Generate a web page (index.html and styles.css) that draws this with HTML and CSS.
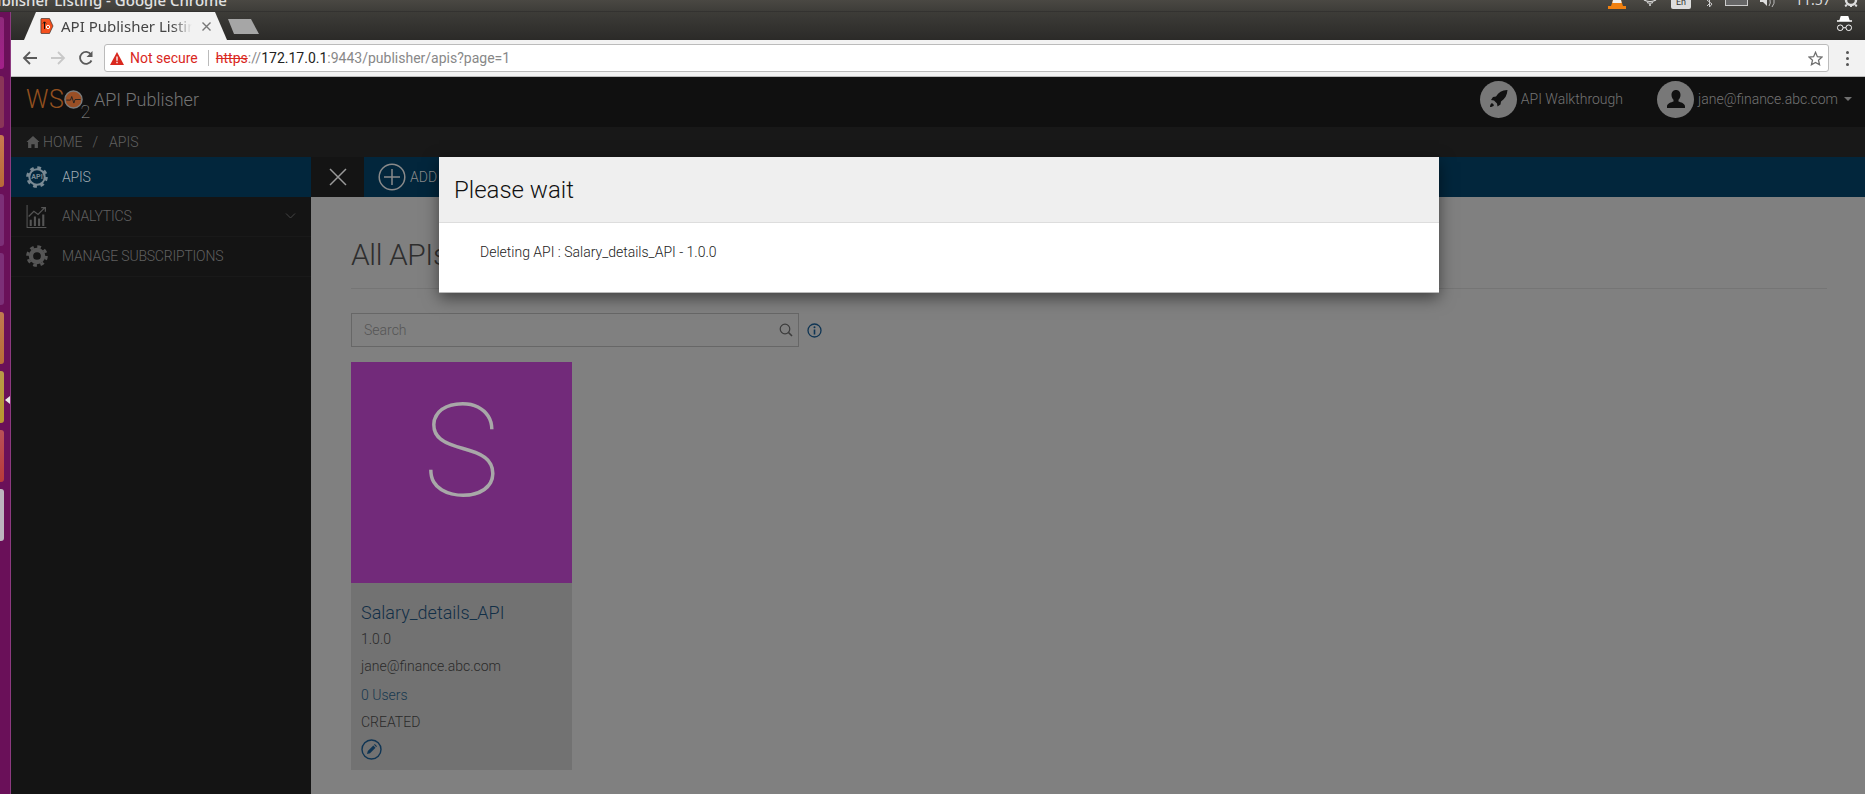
FILE: index.html
```html
<!DOCTYPE html>
<html lang="en">
<head>
    <meta charset="UTF-8">
    <title>API Publisher Listing - Google Chrome</title>
    <link rel="stylesheet" href="styles.css">
</head>
<body>
    <div class="os-bar">
        <div class="os-title">ublisher Listing - Google Chrome</div>
        <div class="tray">
            <svg class="tray-vlc" width="18" height="9" viewBox="0 0 18 9"><path d="M5 0h8l2 6h3v3H0V6h3z" fill="#f08010"/><path d="M5 0h8l.7 3H4.300z" fill="#eee"/></svg>
            <svg class="tray-wifi" width="14" height="6" viewBox="0 0 14 6"><path d="M1 0q6 3 12 0M4 2.500q3 1.500 6 0" stroke="#ddd" stroke-width="1.200" fill="none"/><circle cx="7" cy="5" r="1" fill="#ddd"/></svg>
            <div class="tray-lang">En</div>
            <svg class="tray-bt" width="8" height="8" viewBox="0 0 8 8"><path d="M1 0l5 4-2.500 3V0M1 6l3-3" stroke="#ccc" fill="none"/></svg>
            <div class="tray-battery"></div>
            <svg class="tray-sound" width="18" height="8" viewBox="0 0 18 8"><path d="M0 0h3l4-2v8L3 2H0z" fill="#ddd"/><path d="M10 0q1 3-1 6M14 0q1 3-2 7" stroke="#bbb" fill="none"/></svg>
            <div class="tray-time">11:57</div>
            <svg class="tray-gear" width="16" height="8" viewBox="0 0 16 8"><circle cx="8" cy="0" r="5" fill="none" stroke="#ddd" stroke-width="2.500"/><path d="M2 6l2-1M14 6l-2-1M8 7V5" stroke="#ddd" stroke-width="2"/></svg>
        </div>
    </div>

    <div class="desktop">
        <div class="launcher">
            <div class="launcher-item tile-1"></div>
            <div class="launcher-item tile-2"></div>
            <div class="launcher-item tile-3"></div>
            <div class="launcher-item tile-4"></div>
            <div class="launcher-item tile-4"></div>
            <div class="launcher-item tile-5"></div>
            <div class="launcher-item tile-6"></div>
            <div class="launcher-item tile-7"></div>
            <div class="launcher-item tile-8"></div>
            <div class="launcher-arrow"></div>
        </div>

        <div class="window">
            <div class="tabstrip">
                <div class="tab">
                    <svg class="tab-icon" width="14" height="16" viewBox="0 0 13 16"><path d="M1 .5h8l3.500 7.500L9 15.500H1a.6.6 0 0 1-.6-.6V1A.6.6 0 0 1 1 .5z" fill="#f4501e" stroke="#222" stroke-width=".6"/><path d="M4 11V4M2.500 5.500L4 3.800l1.500 1.700" stroke="#111" fill="none"/><circle cx="7.500" cy="9" r="1.700" fill="none" stroke="#fff"/></svg>
                    <span class="tab-title">API Publisher Listing</span>
                    <svg class="tab-close" width="9" height="9" viewBox="0 0 9 9"><path d="M.5.5l8 8M8.500.5l-8 8" stroke="#777" stroke-width="1.400"/></svg>
                </div>
                <div class="new-tab"></div>
                <svg class="incognito" width="17" height="16" viewBox="0 0 18 17"><path d="M5 0h8l1.500 4.500H17V6H1V4.500h2.500z" fill="#fff"/><circle cx="4.500" cy="12.500" r="3" fill="none" stroke="#fff"/><circle cx="13.500" cy="12.500" r="3" fill="none" stroke="#fff"/><path d="M7.500 12.500h3" stroke="#fff"/></svg>
            </div>

            <div class="toolbar">
                <svg class="nav-btn" width="16" height="16" viewBox="0 0 16 16"><path d="M15 8H2M8 2L2 8l6 6" stroke="#5a5a5a" stroke-width="1.800" fill="none"/></svg>
                <svg class="nav-btn" width="16" height="16" viewBox="0 0 16 16"><path d="M1 8h13M8 2l6 6-6 6" stroke="#c8c8c8" stroke-width="1.800" fill="none"/></svg>
                <svg class="nav-btn" width="16" height="16" viewBox="0 0 16 16"><path d="M13.500 10.500A6 6 0 1 1 13 4.500" stroke="#5a5a5a" stroke-width="1.800" fill="none"/><path d="M14.500 1v6h-6z" fill="#5a5a5a"/></svg>
                <div class="omnibox">
                    <svg class="warn-icon" width="14" height="13" viewBox="0 0 14 13"><path d="M7 0l7 13H0z" fill="#d9281e"/><path d="M7 4.500v4.300M7 9.800v1.500" stroke="#fff" stroke-width="1.300"/></svg>
                    <span class="not-secure">Not secure</span>
                    <span class="omni-sep"></span>
                    <span class="url"><s class="url-scheme">https</s><span class="url-dim">://</span><span class="url-host">172.17.0.1</span><span class="url-dim">:9443/publisher/apis?page=1</span></span>
                    <svg class="star" width="15" height="15" viewBox="0 0 24 24"><path d="M12 2l3 7 7.500.7-5.700 5 1.700 7.300L12 18.200 5.500 22l1.700-7.300-5.700-5L9 9z" fill="none" stroke="#6e6e6e" stroke-width="2"/></svg>
                </div>
                <div class="chrome-menu"><i></i><i></i><i></i></div>
            </div>

            <div class="navbar">
                <div class="logo">
                    <span class="logo-ws">WS</span>
                    <svg class="logo-o" width="19" height="19" viewBox="0 0 16 16"><circle cx="8" cy="8" r="7.200" fill="#9a4f25" stroke="#7b7b7b" stroke-width="1.200"/><path d="M2 8.500h3.500l1-3 1.800 5.500 1-3H14" stroke="#222" stroke-width=".8" fill="none"/></svg>
                    <span class="logo-two">2</span>
                </div>
                <span class="brand">API Publisher</span>
                <div class="nav-right">
                    <div class="nav-link">
                        <span class="nav-circle">
                            <svg width="22" height="22" viewBox="0 0 22 22"><path d="M20 2c-5 .3-8.500 2.500-11 6.500L6 9l-2 3 3 .5 3 3 .5 3 3-2 .5-3c4-2.500 6.200-6.500 6.500-11.500z" fill="#111"/><path d="M5 15c-1.500.5-2 2.500-2 4 1.500 0 3.500-.5 4-2z" fill="#111"/></svg>
                        </span>
                        <span>API Walkthrough</span>
                    </div>
                    <div class="nav-link nav-user">
                        <span class="nav-circle">
                            <svg width="22" height="22" viewBox="0 0 22 22"><path d="M11 2c3 0 4.500 2.300 4.500 5 0 2-1 3.800-2 4.800v1.700c2 .8 6.500 1.700 6.500 5V20H2v-1.500c0-3.300 4.500-4.200 6.500-5v-1.700c-1-1-2-2.800-2-4.800 0-2.700 1.500-5 4.500-5z" fill="#111"/></svg>
                        </span>
                        <span>jane@finance.abc.com</span>
                        <span class="caret"></span>
                    </div>
                </div>
            </div>

            <div class="breadcrumb">
                <svg width="14" height="12" viewBox="0 0 12 11"><path d="M6 0l6 5.500h-1.500V11H7.500V7.500h-3V11H1.500V5.500H0z" fill="#555"/></svg>
                <span class="crumb-home">HOME</span>
                <span class="crumb-sep">/</span>
                <span>APIS</span>
            </div>

            <div class="workspace">
                <nav class="sidebar">
                    <div class="side-item active">
                        <svg class="side-icon" width="22" height="22" viewBox="0 0 20 20"><circle cx="10" cy="10" r="8.500" fill="none" stroke="#7a8a94" stroke-width="2.600" stroke-dasharray="3.400 3.275"/><circle cx="10" cy="10" r="7" fill="none" stroke="#7a8a94" stroke-width="1.800"/><text x="10" y="12" class="gear-text">API</text></svg>
                        <span>APIS</span>
                    </div>
                    <div class="side-item">
                        <svg class="side-icon" width="22" height="23" viewBox="0 0 20 22"><path d="M.5 0v21.500H19" stroke="#555" fill="none"/><path d="M3 20v-6h2v6zM7 20v-9h2v9zM11 20v-7h2v7zM15 20V9h2v11z" fill="#555"/><path d="M2 11l5-5 4 3 6-6M14 2.500h4v4" stroke="#555" stroke-width="1.200" fill="none"/></svg>
                        <span>ANALYTICS</span>
                        <svg class="chevron" width="11" height="6" viewBox="0 0 10 6"><path d="M.5.5L5 5 9.500.5" stroke="#444" fill="none"/></svg>
                    </div>
                    <div class="side-item">
                        <svg class="side-icon" width="22" height="22" viewBox="0 0 20 20"><circle cx="10" cy="10" r="8.500" fill="none" stroke="#555" stroke-width="2.600" stroke-dasharray="3.400 3.275"/><circle cx="10" cy="10" r="5.500" fill="none" stroke="#555" stroke-width="4"/></svg>
                        <span>MANAGE SUBSCRIPTIONS</span>
                    </div>
                </nav>

                <main class="content">
                    <div class="action-bar">
                        <div class="close-block">
                            <svg width="18" height="18" viewBox="0 0 18 18"><path d="M1 1l16 16M17 1L1 17" stroke="#9a9a9a" stroke-width="1.500"/></svg>
                        </div>
                        <div class="actions">
                            <svg width="28" height="28" viewBox="0 0 28 28"><circle cx="14" cy="14" r="12.800" fill="none" stroke="#8a8a8a" stroke-width="1.500"/><path d="M14 6v16M6 14h16" stroke="#8a8a8a" stroke-width="1.500"/></svg>
                            <span>ADD</span>
                        </div>
                    </div>

                    <div class="listing">
                        <h1 class="page-title">All APIs</h1>
                        <div class="search-row">
                            <div class="search-box">
                                <span>Search</span>
                                <svg width="14" height="14" viewBox="0 0 14 14"><circle cx="6" cy="6" r="4.800" fill="none" stroke="#3c3c3c" stroke-width="1.200"/><path d="M9.500 9.500L13 13" stroke="#3c3c3c" stroke-width="1.600"/></svg>
                            </div>
                            <svg width="15" height="15" viewBox="0 0 15 15"><circle cx="7.500" cy="7.500" r="6.500" fill="none" stroke="#0f3554" stroke-width="1.300"/><path d="M7.500 6.500v5" stroke="#0f3554" stroke-width="1.600"/><circle cx="7.500" cy="4.200" r="1" fill="#0f3554"/></svg>
                        </div>

                        <div class="api-card">
                            <div class="api-thumb">S</div>
                            <div class="api-info">
                                <div class="api-name">Salary_details_API</div>
                                <div class="api-version">1.0.0</div>
                                <div class="api-owner">jane@finance.abc.com</div>
                                <div class="api-users">0 Users</div>
                                <div class="api-status">CREATED</div>
                                <svg class="api-edit" width="21" height="21" viewBox="0 0 21 21"><circle cx="10.500" cy="10.500" r="9.500" fill="none" stroke="#0f3554" stroke-width="1.400"/><path d="M6 15l.8-3 5.500-5.500 2.200 2.200L9 14.200z" fill="#0f3554"/><path d="M13 5.800l.8-.8 2.200 2.200-.8.800z" fill="#0f3554"/></svg>
                            </div>
                        </div>
                    </div>
                </main>
            </div>
        </div>
    </div>

    <div class="modal">
        <div class="modal-header">Please wait</div>
        <div class="modal-body">Deleting API : Salary_details_API - 1.0.0</div>
    </div>
</body>
</html>
```

FILE: styles.css
```css
html, body {
    margin: 0;
    height: 100%;
}

body {
    width: 1865px;
    height: 794px;
    overflow: hidden;
    font-family: Roboto, "Liberation Sans", sans-serif;
    background-color: #808080;
}

/* desktop title bar, cut off by the top of the screen */
.os-bar {
    height: 12px;
    box-sizing: border-box;
    display: flex;
    justify-content: space-between;
    overflow: hidden;
    background: linear-gradient(#4a4843, #3e3d39);
    border-bottom: 1px solid #333230;
}

.os-title {
    margin: -9px 0 0 -8px;
    font-family: "Noto Sans", sans-serif;
    font-size: 15px;
    font-weight: 500;
    line-height: 18px;
    white-space: nowrap;
    color: #e2e2e2;
}

.tray {
    display: flex;
    align-items: flex-start;
    height: 12px;
    padding-right: 6px;
}

.tray-vlc { margin-right: 17px; }
.tray-wifi { margin-right: 14px; }

.tray-lang {
    width: 20px;
    height: 9px;
    margin-right: 15px;
    background: #ddd;
    border-radius: 0 0 2px 2px;
    font-size: 9px;
    line-height: 4px;
    text-align: center;
    color: #333;
}

.tray-bt { margin-right: 11px; }

.tray-battery {
    width: 21px;
    height: 5px;
    margin-right: 12px;
    border: 1px solid #ccc;
    border-top: none;
    background: #666;
}

.tray-sound { margin-right: 17px; }

.tray-time {
    width: 34px;
    margin-top: -9px;
    margin-right: 14px;
    font-family: "Noto Sans", sans-serif;
    font-size: 14px;
    line-height: 18px;
    color: #ddd;
}

.desktop {
    display: flex;
    height: 782px;
}

/* launcher strip */
.launcher {
    position: relative;
    width: 11px;
    flex-shrink: 0;
    box-sizing: border-box;
    padding-top: 5px;
    display: flex;
    flex-direction: column;
    gap: 7px;
    background: #6a1059;
    border-right: 1px solid #8c3a80;
}

.launcher-item {
    width: 4px;
    height: 52px;
    flex-shrink: 0;
    border-radius: 0 3px 3px 0;
}

.tile-1 { background: linear-gradient(#8f2a7c, #a3208a); }
.tile-2 { background: #8a3558; }
.tile-3 { background: linear-gradient(#c87a50, #b86a38); }
.tile-4 { background: #7c2f78; }
.tile-5 { background: linear-gradient(#c07a50, #b86c38); }
.tile-6 { background: linear-gradient(#b89a48, #b8982e); }
.tile-7 { background: linear-gradient(#b85058, #b83a3a); }
.tile-8 { background: #bdb5bf; }

.launcher-arrow {
    position: absolute;
    top: 384px;
    left: 5px;
    border-top: 4px solid transparent;
    border-bottom: 4px solid transparent;
    border-right: 5px solid #e8e8e8;
}

.window {
    flex: 1;
    min-width: 0;
    display: flex;
    flex-direction: column;
}

/* browser chrome */
.tabstrip {
    height: 28px;
    flex-shrink: 0;
    display: flex;
    align-items: flex-end;
    background: linear-gradient(#3d3c38, #2b2a28);
}

.tab {
    width: 203px;
    height: 28px;
    margin-left: 13px;
    box-sizing: border-box;
    padding-left: 16px;
    display: flex;
    align-items: center;
    background: #f2f2f2;
    clip-path: polygon(12px 0, 191px 0, 203px 100%, 0 100%);
    font-family: "Noto Sans", sans-serif;
    font-size: 15px;
    color: #444;
}

.tab-icon { margin-right: 7px; flex-shrink: 0; }

.tab-title {
    width: 131px;
    flex-shrink: 0;
    overflow: hidden;
    white-space: nowrap;
    -webkit-mask-image: linear-gradient(to right, #000 85%, transparent);
    mask-image: linear-gradient(to right, #000 85%, transparent);
}

.tab-close {
    margin-left: 10px;
}

.new-tab {
    width: 32px;
    height: 15px;
    margin-bottom: 6px;
    background: #a6a6a6;
    clip-path: polygon(1px 0, 24px 0, 32px 100%, 7px 100%);
}

.incognito {
    margin-left: auto;
    margin-right: 12px;
    margin-bottom: 8px;
}

.toolbar {
    height: 37px;
    flex-shrink: 0;
    box-sizing: border-box;
    padding-left: 11px;
    display: flex;
    align-items: center;
    background: #f2f2f2;
    border-bottom: 1px solid #bdbdbd;
}

.nav-btn { margin-right: 12px; }

.omnibox {
    width: 1725px;
    height: 28px;
    margin-left: -2px;
    box-sizing: border-box;
    padding: 0 5px 0 5px;
    display: flex;
    align-items: center;
    background: #fff;
    border: 1px solid #bbb;
    border-radius: 3px;
    font-size: 14px;
}

.warn-icon { margin-right: 6px; }

.not-secure { color: #d9281e; }

.omni-sep {
    width: 1px;
    height: 16px;
    margin: 0 7px 0 10px;
    background: #bbb;
}

.url-scheme { color: #d9281e; }
.url-host { color: #222; }
.url-dim { color: #888; }

.star { margin-left: auto; }

.chrome-menu {
    margin-left: 17px;
    display: flex;
    flex-direction: column;
    gap: 3px;
}

.chrome-menu i {
    width: 3px;
    height: 3px;
    border-radius: 50%;
    background: #555;
}

/* app header */
.navbar {
    height: 50px;
    flex-shrink: 0;
    box-sizing: border-box;
    padding: 0 0 6px 15px;
    display: flex;
    align-items: center;
    background: #101010;
    font-weight: 300;
    color: #747474;
}

.logo {
    display: flex;
    align-items: center;
    width: 68px;
    flex-shrink: 0;
}

.logo-ws {
    font-size: 25px;
    font-weight: 300;
    letter-spacing: .6px;
    color: #93501f;
}

.logo-two {
    margin: 24px 0 0 -3px;
    font-size: 18px;
    font-weight: 100;
    color: #9a9a9a;
}

.brand {
    font-size: 18px;
}

.nav-right {
    margin-left: auto;
    display: flex;
    align-items: center;
    padding-right: 13px;
}

.nav-link {
    display: flex;
    align-items: center;
    gap: 4px;
    font-size: 14px;
}

.nav-user { margin-left: 34px; }

.nav-circle {
    width: 37px;
    height: 37px;
    display: flex;
    align-items: center;
    justify-content: center;
    border-radius: 50%;
    background: #787878;
}

.caret {
    margin-left: 2px;
    border-top: 4px solid #707070;
    border-left: 4px solid transparent;
    border-right: 4px solid transparent;
}

.breadcrumb {
    height: 30px;
    flex-shrink: 0;
    box-sizing: border-box;
    padding: 0 0 1px 15px;
    display: flex;
    align-items: center;
    background: #181818;
    font-size: 14px;
    font-weight: 300;
    color: #606060;
}

.crumb-home { margin-left: 3px; }
.crumb-sep { margin: 0 11px 0 10px; }

.workspace {
    flex: 1;
    display: flex;
    min-height: 0;
}

/* sidebar */
.sidebar {
    width: 300px;
    flex-shrink: 0;
    background: #141414;
}

.side-item {
    height: 40px;
    box-sizing: border-box;
    padding: 0 15px 1px;
    display: flex;
    align-items: center;
    border-bottom: 1px solid #191919;
    font-size: 14px;
    font-weight: 300;
    letter-spacing: -.2px;
    color: #606060;
}

.side-item.active {
    background: #02263c;
    border-bottom: none;
    color: #a0abb2;
}

.side-icon {
    margin-right: 14px;
    flex-shrink: 0;
}

.gear-text {
    font-family: Roboto, sans-serif;
    font-size: 6.500px;
    font-weight: 700;
    text-anchor: middle;
    letter-spacing: 0;
    fill: #7a8a94;
}

.chevron { margin-left: auto; }

/* content */
.content {
    flex: 1;
    min-width: 0;
    background: #808080;
}

.action-bar {
    height: 40px;
    display: flex;
}

.close-block {
    width: 53px;
    display: flex;
    align-items: center;
    justify-content: center;
    background: #141414;
}

.actions {
    flex: 1;
    padding-left: 14px;
    display: flex;
    align-items: center;
    gap: 4px;
    background: #02263c;
    font-size: 14px;
    font-weight: 300;
    color: #8a8a8a;
}

.listing {
    padding: 0 38px 0 40px;
}

.page-title {
    margin: 0;
    height: 52px;
    padding-top: 39px;
    border-bottom: 1px solid #757575;
    font-size: 30px;
    font-weight: 300;
    letter-spacing: -.4px;
    line-height: 38px;
    color: #2e2e2e;
}

.search-row {
    margin-top: 24px;
    display: flex;
    align-items: center;
    gap: 8px;
}

.search-box {
    width: 448px;
    height: 34px;
    box-sizing: border-box;
    padding: 0 5px 0 12px;
    display: flex;
    align-items: center;
    justify-content: space-between;
    border: 1px solid #676767;
    font-size: 14px;
    font-weight: 300;
    color: #555;
}

.api-card {
    width: 221px;
    margin-top: 15px;
    background: #727272;
}

.api-thumb {
    height: 221px;
    box-sizing: border-box;
    padding-bottom: 42px;
    display: flex;
    align-items: center;
    justify-content: center;
    background: #722a7a;
    font-size: 130px;
    font-weight: 100;
    color: #a8a8a8;
}

.api-info {
    height: 187px;
    box-sizing: border-box;
    padding: 18px 10px 0;
    font-size: 14px;
    font-weight: 300;
    color: #2a2a2a;
}

.api-name {
    font-size: 18px;
    line-height: 24px;
    color: #122f47;
}

.api-version { margin-top: 4px; line-height: 20px; }
.api-owner { margin-top: 7px; line-height: 20px; }
.api-users { margin-top: 9px; line-height: 20px; color: #17384f; }
.api-status { margin-top: 7px; line-height: 20px; }
.api-edit { display: block; margin-top: 7px; }

/* please wait dialog */
.modal {
    position: absolute;
    top: 157px;
    left: 439px;
    width: 1000px;
    height: 136px;
    background: #fff;
    box-shadow: 0 5px 15px rgba(0, 0, 0, .5);
    border-bottom: 1px solid #bbb;
    box-sizing: border-box;
}

.modal-header {
    height: 66px;
    box-sizing: border-box;
    padding-left: 15px;
    display: flex;
    align-items: center;
    background: #efefef;
    border-bottom: 1px solid #ddd;
    font-size: 24px;
    font-weight: 300;
    color: #111;
}

.modal-body {
    padding: 20px 0 0 41px;
    font-size: 14px;
    font-weight: 300;
    line-height: 18px;
    color: #222;
}
```
